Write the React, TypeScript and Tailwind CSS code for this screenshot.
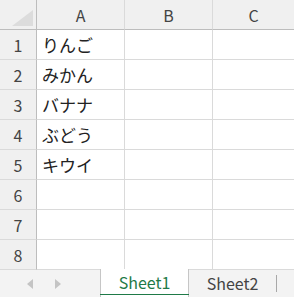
import React from "react";

const rows = ["りんご", "みかん", "バナナ", "ぶどう", "キウイ", "", "", ""];

export default function App() {
  const font = { fontFamily: '"Noto Sans CJK JP", "Noto Sans", sans-serif' };
  return (
    <div className="w-[294px] h-[298px] overflow-hidden bg-white" style={font}>
      <div className="grid grid-cols-[37px_88px_88px_81px]">
        <div className="h-[30px] bg-[#f0f0f0] border-r border-b border-[#bdbdbd] relative">
          <svg className="absolute left-0 top-0" width="36" height="29">
            <polygon points="12,26 33,26 33,10" fill="#dcdcdc" />
          </svg>
        </div>
        {["A", "B", "C"].map((c, i) => (
          <div
            key={c}
            className={`h-[30px] bg-[#f0f0f0] border-b border-b-[#bdbdbd] ${i < 2 ? "border-r border-r-[#dadada]" : ""} flex items-center justify-center text-[16px] text-[#444]`}
          >
            {c}
          </div>
        ))}
        {rows.map((r, i) => (
          <React.Fragment key={i}>
            <div className="h-[30px] bg-[#f0f0f0] border-r border-r-[#bdbdbd] border-b border-b-[#dadada] flex items-center justify-center text-[16px] text-[#444]">
              {i + 1}
            </div>
            <div className="h-[30px] border-r border-b border-[#dadada] flex items-center pl-[5px] text-[17px] text-[#222] leading-none">
              {r}
            </div>
            <div className="h-[30px] border-r border-b border-[#dadada]" />
            <div className="h-[30px] border-b border-[#dadada]" />
          </React.Fragment>
        ))}
      </div>
      <div className="h-[28px] bg-[#f3f3f3] border-t border-[#c6c6c6] -mt-[1px] flex items-stretch">
        <div className="w-[100px] flex items-center">
          <svg className="ml-[27px]" width="6" height="10" viewBox="0 0 6 10">
            <polygon points="6,0 6,10 0,5" fill="#c4c4c4" />
          </svg>
          <svg className="ml-[22px]" width="6" height="10" viewBox="0 0 6 10">
            <polygon points="0,0 0,10 6,5" fill="#c4c4c4" />
          </svg>
        </div>
        <div className="w-[89px] -mt-[1px] bg-white border-l border-r border-[#c6c6c6] flex flex-col">
          <div className="flex-1 flex items-center justify-center text-[16px] text-[#1f7a48] pt-[1px]">Sheet1</div>
          <div className="h-[3px] bg-[#1f7a48] mb-[2px] -mx-[1px]" />
        </div>
        <div className="w-[87px] flex items-center justify-center text-[16px] text-[#444] pb-[2px]">Sheet2</div>
        <div className="w-[1px] h-[17px] bg-[#a8a8a8] mt-[5px]" />
      </div>
    </div>
  );
}
